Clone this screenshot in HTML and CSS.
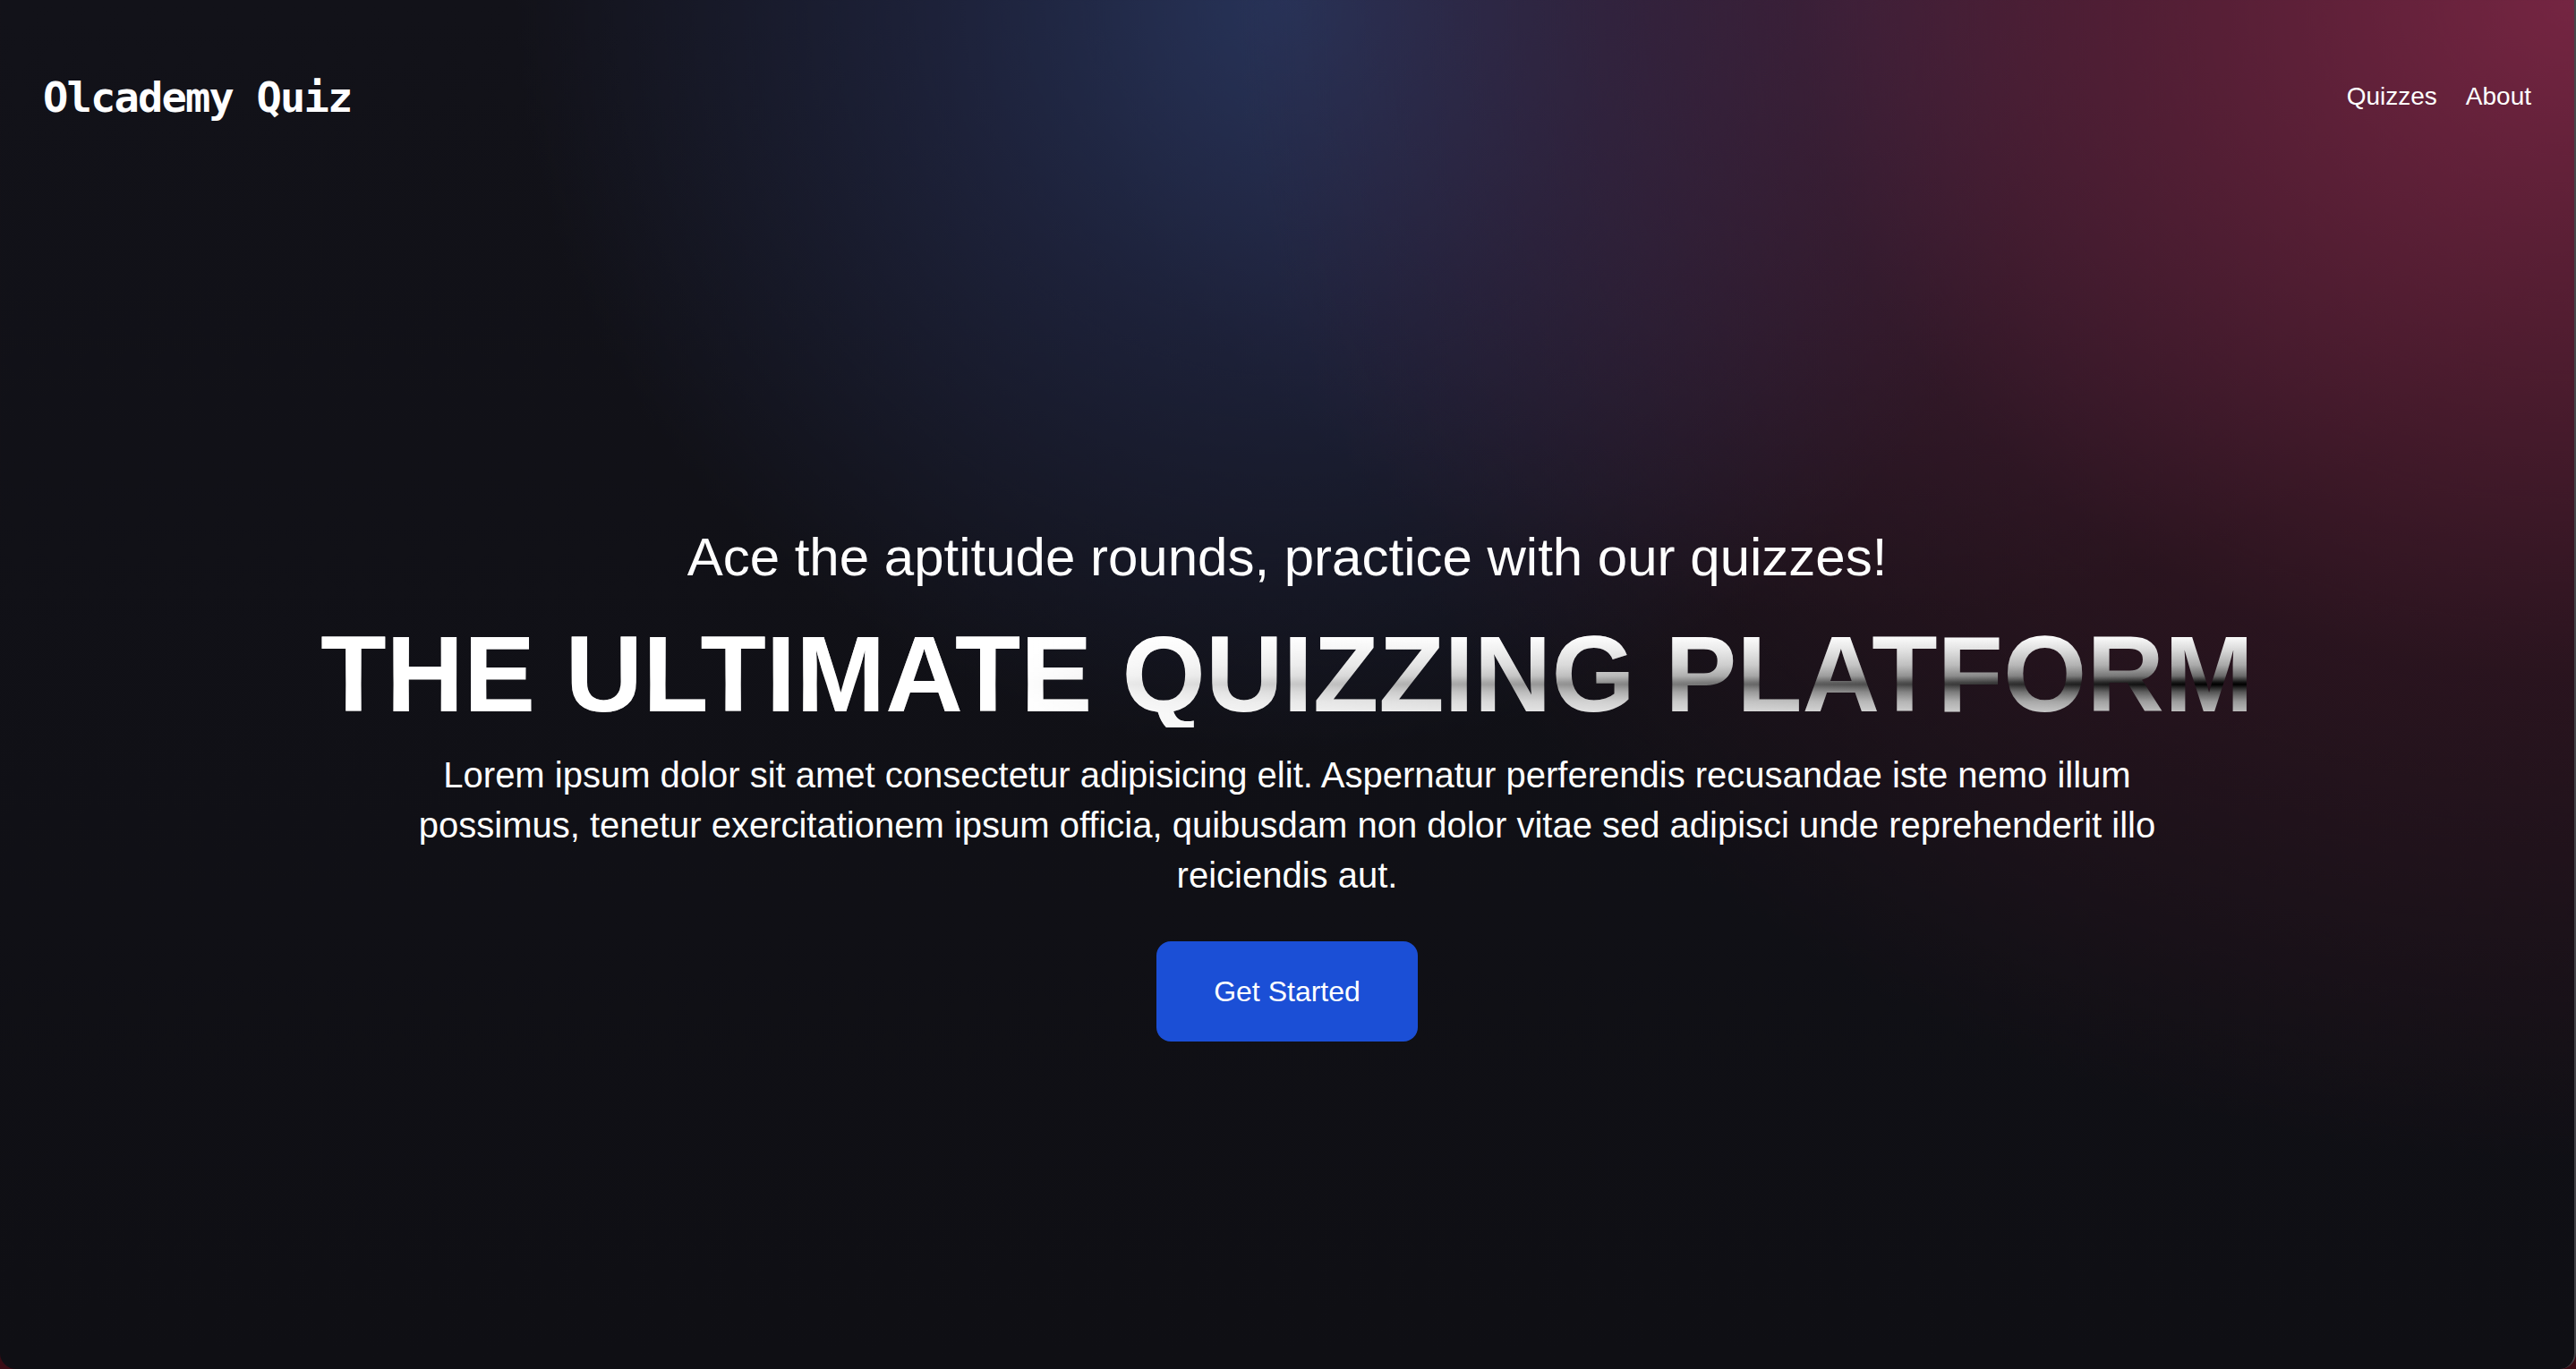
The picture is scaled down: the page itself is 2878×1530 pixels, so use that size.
FILE: index.html
```html
<!DOCTYPE html>
<html lang="en">
<head>
<meta charset="utf-8">
<title>Olcademy Quiz</title>
<link rel="stylesheet" href="styles.css">
</head>
<body>
<div class="page">
  <header class="nav">
    <a class="logo" href="#">Olcademy Quiz</a>
    <nav class="links">
      <a href="#">Quizzes</a>
      <a href="#">About</a>
    </nav>
  </header>
  <main class="hero">
    <h2 class="subtitle">Ace the aptitude rounds, practice with our quizzes!</h2>
    <h1 class="title">THE ULTIMATE QUIZZING PLATFORM</h1>
    <p class="lead">Lorem ipsum dolor sit amet consectetur adipisicing elit. Aspernatur perferendis recusandae iste nemo illum possimus, tenetur exercitationem ipsum officia, quibusdam non dolor vitae sed adipisci unde reprehenderit illo reiciendis aut.</p>
    <a class="cta" href="#">Get Started</a>
  </main>
</div>
</body>
</html>
```
FILE: styles.css
```css
* { box-sizing: border-box; }
html, body { margin: 0; padding: 0; }
body {
  background: #3a0c15;
  font-family: "Liberation Sans", Arial, Helvetica, sans-serif;
  color: #fff;
  overflow: hidden;
}
a { color: inherit; text-decoration: none; }
.page {
  width: 100%;
  height: 1530px;
  display: flex;
  flex-direction: column;
  border-right: 2px solid rgba(255,255,255,0.22);
  border-radius: 0 0 18px 18px;
  overflow: hidden;
  background:
    radial-gradient(ellipse 52% 85% at 100% 0%, rgba(122,38,68,0.95) 0%, rgba(100,32,56,0.78) 28%, rgba(72,24,40,0.45) 58%, rgba(45,16,28,0) 100%),
    radial-gradient(ellipse 30% 55% at 50% 0%, rgba(40,54,94,0.9) 0%, rgba(38,46,84,0.55) 45%, rgba(30,35,60,0) 100%),
    radial-gradient(ellipse 30% 45% at 72% 0%, rgba(72,45,88,0.6) 0%, rgba(60,40,80,0) 100%),
    linear-gradient(180deg, #121219 0%, #0f0f14 100%);
}
.nav {
  height: 216px;
  padding: 0 48px;
  display: flex;
  align-items: center;
  justify-content: space-between;
}
.logo {
  font-family: "DejaVu Sans Mono", "Liberation Mono", monospace;
  font-weight: bold;
  font-size: 47px;
  letter-spacing: -1.8px;
}
.links {
  display: flex;
  gap: 32px;
  font-size: 28px;
}
.hero {
  flex: 1;
  display: flex;
  flex-direction: column;
  align-items: center;
  padding-top: 371px;
  text-align: center;
}
.subtitle {
  margin: 0;
  font-size: 60px;
  line-height: 72px;
  font-weight: normal;
}
.title {
  display: inline-block;
  margin: 34px 0 0;
  font-size: 120px;
  line-height: 120px;
  font-weight: bold;
  color: transparent;
  background:
    linear-gradient(90deg, #fff 0%, #fff 36%, rgba(255,255,255,0.55) 66%, rgba(255,255,255,0) 98%),
    linear-gradient(180deg, #fff 0%, #fafafa 16%, #d8d8d8 28%, #a8a8a8 42%, #6a6a6a 52%, #111 58%, #000 60%, #555 67%, #999 76%, #bdbdbd 86%, #ccc 100%);
  -webkit-background-clip: text;
  background-clip: text;
}
.lead {
  margin: 25px 0 0;
  max-width: 2000px;
  font-size: 40px;
  line-height: 56px;
}
.cta {
  margin-top: 46px;
  background: #1b4fd6;
  border-radius: 16px;
  padding: 32px 64px;
  font-size: 32px;
  line-height: 48px;
}
```
